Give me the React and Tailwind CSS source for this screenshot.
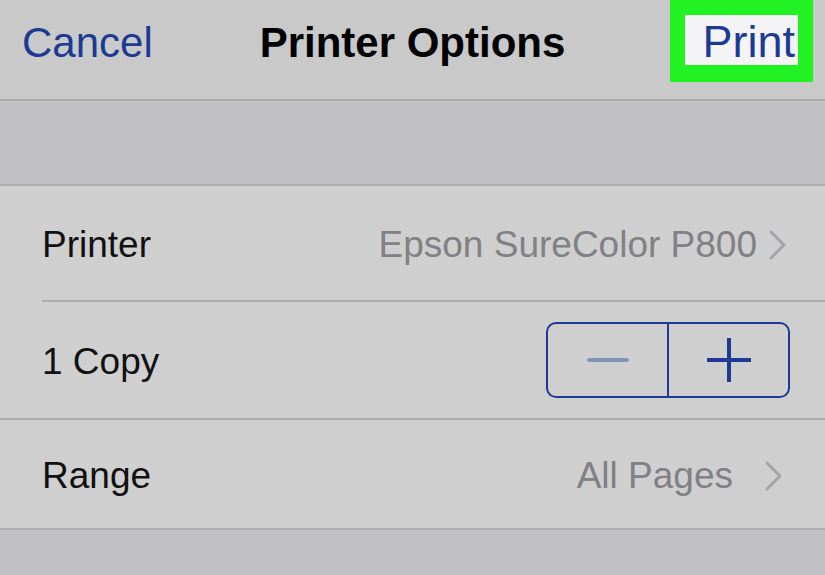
import React from 'react';

const Chevron = () => (
  <svg width="22" height="32" viewBox="0 0 22 32" className="shrink-0">
    <polyline points="4,3 17,16 4,29" fill="none" stroke="#a4a4a8" strokeWidth="3" strokeLinecap="round" strokeLinejoin="round" />
  </svg>
);

const Row = ({ label, h, border, children }) => (
  <div className={`flex items-center justify-between bg-[#cfcfcf] pl-[42px] ${h} ${border}`}>
    <span className="text-[37px] text-[#111] pt-[4px]">{label}</span>
    {children}
  </div>
);

export default function App() {
  return (
    <div className="w-[825px] h-[575px] overflow-hidden bg-[#c1c0c5] font-['Liberation_Sans',Arial,sans-serif]">
      <header className="grid grid-cols-[1fr_auto_1fr] items-center h-[101px] bg-[#c9c9c9] border-b-2 border-[#a9a9a9]">
        <button className="justify-self-start pl-[22px] text-[42px] text-[#1c3a94] pb-[14px]">Cancel</button>
        <h1 className="text-[42px] font-bold text-black pb-[14px]">Printer Options</h1>
        <div className="justify-self-end self-start mr-[12px] bg-[#22f222] w-[143px] h-[82px] p-[15px]">
          <div className="bg-[#f4f4f6] h-[50px] flex items-center justify-end pr-[3px]">
            <span className="text-[45px] text-[#1c3a94] leading-none pt-[2px]">Print</span>
          </div>
        </div>
      </header>

      <div className="h-[85px] border-b-2 border-[#adadad]" />

      <div className="bg-[#cfcfcf]">
        <div className="flex items-center justify-between pl-[42px] pr-[36px] h-[114px]">
          <span className="text-[37px] text-[#111] pt-[4px]">Printer</span>
          <div className="flex items-center gap-[10px] pt-[4px]">
            <span className="text-[37px] text-[#808085]">Epson SureColor P800</span>
            <Chevron />
          </div>
        </div>
        <div className="ml-[42px] h-[2px] bg-[#adadad]" />
      </div>

      <Row label="1 Copy" h="h-[118px] pr-[35px]" border="border-b-2 border-[#adadad]">
        <div className="flex w-[244px] h-[76px] border-2 border-[#1c3a94] rounded-[10px]">
          <div className="flex-1 flex items-center justify-center border-r-2 border-[#1c3a94]">
            <div className="w-[42px] h-[4px] rounded-full bg-[#8391ba]" />
          </div>
          <div className="flex-1 flex items-center justify-center">
            <svg width="44" height="44" viewBox="0 0 44 44">
              <path d="M22 1 V43 M1 22 H43" stroke="#1c3a94" strokeWidth="4" strokeLinecap="round" />
            </svg>
          </div>
        </div>
      </Row>

      <Row label="Range" h="h-[110px] pr-[40px]" border="border-b-2 border-[#adadad]">
        <div className="flex items-center gap-[30px] pt-[4px]">
          <span className="text-[37px] text-[#808085]">All Pages</span>
          <Chevron />
        </div>
      </Row>
    </div>
  );
}
